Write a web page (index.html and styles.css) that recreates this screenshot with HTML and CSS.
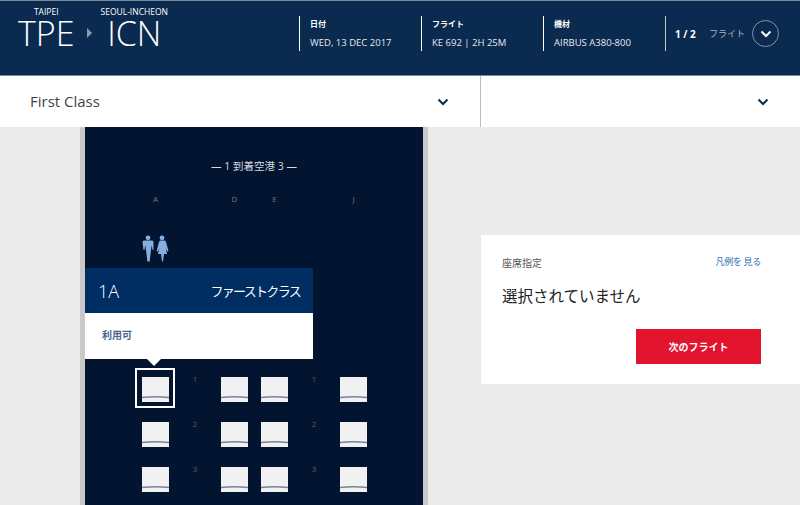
FILE: index.html
```html
<!DOCTYPE html>
<html lang="ja">
<head>
  <meta charset="UTF-8">
  <meta name="viewport" content="width=device-width, initial-scale=1.0">
  <title>座席指定</title>
  <link rel="stylesheet" href="styles.css">
</head>
<body>
  <svg class="defs" width="0" height="0">
    <symbol id="seat" viewBox="0 0 27 25">
      <rect width="27" height="25" fill="#f1f1f1"/>
      <path d="M0 20.500 Q13.500 19 27 20.500" fill="none" stroke="#77839a" stroke-width="1.400"/>
    </symbol>
  </svg>

  <header class="flight-bar">
    <div class="route">
      <div class="airport">
        <span class="city">TAIPEI</span>
        <span class="code">TPE</span>
      </div>
      <span class="route-arrow"></span>
      <div class="airport">
        <span class="city">SEOUL-INCHEON</span>
        <span class="code">ICN</span>
      </div>
    </div>
    <div class="info">
      <span class="info-label">日付</span>
      <span class="info-value">WED, 13 DEC 2017</span>
    </div>
    <div class="info">
      <span class="info-label">フライト</span>
      <span class="info-value">KE 692 | 2H 25M</span>
    </div>
    <div class="info">
      <span class="info-label">機材</span>
      <span class="info-value">AIRBUS A380-800</span>
    </div>
    <div class="pager">
      <strong>1 / 2</strong>
      <span>フライト</span>
      <button class="circle-btn">
        <svg width="12" height="8" viewBox="0 0 12 8"><path d="M1.500 1.500 6 6l4.500-4.500" fill="none" stroke="#fff" stroke-width="2"/></svg>
      </button>
    </div>
  </header>

  <nav class="cabin-select">
    <div class="select select-left">
      <span class="select-text">First Class</span>
      <svg width="12" height="8" viewBox="0 0 12 8"><path d="M1.500 1.500 6 6l4.500-4.500" fill="none" stroke="#0a2a4f" stroke-width="2"/></svg>
    </div>
    <div class="select select-right">
      <svg width="12" height="8" viewBox="0 0 12 8"><path d="M1.500 1.500 6 6l4.500-4.500" fill="none" stroke="#0a2a4f" stroke-width="2"/></svg>
    </div>
  </nav>

  <main class="content">
    <section class="cabin">
      <div class="cabin-title">— 1 到着空港 3 —</div>

      <div class="seat-grid letters">
        <span>A</span><span></span><span>D</span><span></span><span>E</span><span></span><span>J</span>
      </div>

      <div class="lavatory">
        <svg width="28" height="27" viewBox="0 0 28 27" fill="#86aede">
          <circle cx="7" cy="2.800" r="2.400"/>
          <path d="M1.500 7q0-1.500 1.500-1.500h8q1.500 0 1.500 1.500v8h-1l-.8-5-1.200 9-.8 7.500H6.300L5.500 19l-1.200-9-.8 5h-1z"/>
          <circle cx="21" cy="2.800" r="2.400"/>
          <path d="M18.500 5.500h5q1 0 1.500 1.500l2.500 9-1.500.5-1.500-4 1.500 6.500h-3l-1 7.500h-1l-1-7.500h-3l1.500-6.500-1.500 4-1.500-.5 2.500-9q.5-1.500 1.500-1.500z"/>
        </svg>
      </div>

      <div class="seat-rows">
        <div class="seat-grid row">
          <div class="seat selected"><svg width="27" height="25"><use href="#seat"/></svg></div>
          <span class="row-no">1</span>
          <div class="seat"><svg width="27" height="25"><use href="#seat"/></svg></div>
          <span></span>
          <div class="seat"><svg width="27" height="25"><use href="#seat"/></svg></div>
          <span class="row-no">1</span>
          <div class="seat"><svg width="27" height="25"><use href="#seat"/></svg></div>
        </div>
        <div class="seat-grid row">
          <div class="seat"><svg width="27" height="25"><use href="#seat"/></svg></div>
          <span class="row-no">2</span>
          <div class="seat"><svg width="27" height="25"><use href="#seat"/></svg></div>
          <span></span>
          <div class="seat"><svg width="27" height="25"><use href="#seat"/></svg></div>
          <span class="row-no">2</span>
          <div class="seat"><svg width="27" height="25"><use href="#seat"/></svg></div>
        </div>
        <div class="seat-grid row">
          <div class="seat"><svg width="27" height="25"><use href="#seat"/></svg></div>
          <span class="row-no">3</span>
          <div class="seat"><svg width="27" height="25"><use href="#seat"/></svg></div>
          <span></span>
          <div class="seat"><svg width="27" height="25"><use href="#seat"/></svg></div>
          <span class="row-no">3</span>
          <div class="seat"><svg width="27" height="25"><use href="#seat"/></svg></div>
        </div>
      </div>

      <div class="seat-popup">
        <div class="popup-head">
          <span class="popup-seat">1A</span>
          <span class="popup-class">ファーストクラス</span>
        </div>
        <div class="popup-body">利用可</div>
      </div>
    </section>

    <aside class="summary">
      <div class="summary-top">
        <span class="summary-label">座席指定</span>
        <a class="legend-link" href="#">凡例を 見る</a>
      </div>
      <div class="summary-status">選択されていません</div>
      <div class="summary-actions">
        <button class="next-btn">次のフライト</button>
      </div>
    </aside>
  </main>
</body>
</html>
```

FILE: styles.css
```css
* {
  box-sizing: border-box;
}

html, body {
  margin: 0;
  height: 505px;
  overflow: hidden;
}

body {
  background-color: #ebebeb;
  font-family: 'Open Sans', 'Noto Sans CJK JP', sans-serif;
}

.defs {
  position: absolute;
}

/* top flight bar */
.flight-bar {
  height: 76px;
  background: #0a2a4f;
  border-top: 1px solid #7b8794;
  border-bottom: 1px solid #7b8794;
  color: #fff;
  display: flex;
  align-items: flex-start;
  padding-top: 15px;
}

.route {
  width: 299px;
  display: flex;
  padding-left: 18px;
  margin-top: -10px;
}

.airport {
  display: flex;
  flex-direction: column;
  align-items: center;
}

.city {
  font-size: 8.500px;
  line-height: 11px;
}

.code {
  font-size: 34px;
  font-weight: 300;
  line-height: 32px;
}

.route-arrow {
  width: 0;
  height: 0;
  margin: 22px 0 0 12px;
  border-left: 5px solid #8d9aab;
  border-top: 5px solid transparent;
  border-bottom: 5px solid transparent;
}

.airport:last-child {
  margin-left: 9px;
}

.info {
  width: 122px;
  height: 35px;
  border-left: 1px solid #fff;
  padding: 1px 0 1px 10px;
  display: flex;
  flex-direction: column;
  justify-content: space-between;
}

.info-label {
  font-size: 8px;
  font-weight: 700;
  line-height: 13px;
}

.info-value {
  font-size: 9.500px;
  line-height: 14px;
  color: #e6e9ee;
}

.pager {
  height: 35px;
  border-left: 1px solid #c5cbd3;
  padding-left: 9px;
  display: flex;
  align-items: center;
  font-size: 9px;
}

.pager strong {
  font-size: 10px;
  width: 34px;
}

.pager span {
  color: #aab4c0;
  width: 43px;
}

.circle-btn {
  width: 27px;
  height: 27px;
  padding: 0;
  border: 1px solid #8593a5;
  border-radius: 50%;
  background: transparent;
  display: flex;
  justify-content: center;
  align-items: center;
}

/* cabin dropdowns */
.cabin-select {
  height: 51px;
  background: #fff;
  display: flex;
}

.select {
  display: flex;
  align-items: center;
  justify-content: space-between;
}

.select-left {
  width: 481px;
  padding: 0 31px 0 30px;
  border-right: 1px solid #bdbdbd;
  font-size: 15px;
  color: #444;
}

.select-text {
  margin-top: -2px;
}

.select-right {
  flex: 1;
  justify-content: flex-end;
  padding-right: 31px;
}

/* main area */
.content {
  display: flex;
  align-items: flex-start;
  padding-left: 80px;
}

.cabin {
  position: relative;
  width: 348px;
  height: 378px;
  background: #02142f;
  border-left: 5px solid #c9c9c9;
  border-right: 5px solid #c9c9c9;
  padding-top: 32px;
}

.cabin-title {
  text-align: center;
  color: #d5d9e0;
  font-size: 10.500px;
  line-height: 14px;
}

.seat-grid {
  display: grid;
  grid-template-columns: 27px 52px 27px 13px 27px 52px 27px;
  margin-left: 57px;
}

.letters {
  margin-top: 19px;
  height: 14px;
  font-size: 8px;
  line-height: 14px;
  text-align: center;
  color: #6f7889;
}

.lavatory {
  margin: 29px 0 0 56px;
  height: 27px;
}

.lavatory svg {
  display: block;
}

.seat-rows {
  margin-top: 115px;
  display: flex;
  flex-direction: column;
  gap: 20px;
}

.row {
  height: 25px;
}

.seat {
  position: relative;
  height: 25px;
}

.seat svg {
  display: block;
}

.seat.selected::after {
  content: "";
  position: absolute;
  left: -7px;
  top: -9px;
  width: 36px;
  height: 36px;
  border: 2px solid #fff;
}

.row-no {
  margin-top: -3px;
  font-size: 8px;
  line-height: 10px;
  text-align: center;
  color: #565f72;
}

/* popup over the seat map */
.seat-popup {
  position: absolute;
  left: 0;
  top: 141px;
  width: 228px;
}

.seat-popup::after {
  content: "";
  position: absolute;
  left: 62px;
  top: 91px;
  border-top: 7px solid #fff;
  border-left: 7px solid transparent;
  border-right: 7px solid transparent;
}

.popup-head {
  height: 45px;
  background: #002d62;
  color: #fff;
  display: flex;
  justify-content: space-between;
  align-items: center;
  padding: 0 13px;
}

.popup-seat {
  font-size: 18px;
  font-weight: 300;
}

.popup-class {
  font-size: 13px;
  letter-spacing: -1.700px;
}

.popup-body {
  height: 46px;
  background: #fff;
  color: #46658c;
  font-size: 10px;
  font-weight: 700;
  line-height: 44px;
  padding-left: 17px;
}

/* right summary card */
.summary {
  width: 319px;
  height: 149px;
  margin: 108px 0 0 53px;
  background: #fff;
  padding: 20px 39px 0 21px;
}

.summary-top {
  display: flex;
  justify-content: space-between;
  align-items: flex-start;
}

.summary-label {
  font-size: 10px;
  color: #555;
  line-height: 16px;
}

.legend-link {
  font-size: 9px;
  line-height: 13px;
  letter-spacing: -0.300px;
  color: #2f6cb5;
  text-decoration: none;
}

.summary-status {
  margin-top: 14px;
  font-size: 15.500px;
  line-height: 22px;
  color: #222;
}

.summary-actions {
  display: flex;
  justify-content: flex-end;
  margin-top: 22px;
}

.next-btn {
  width: 125px;
  height: 35px;
  border: 0;
  background: #e2132d;
  color: #fff;
  font-family: inherit;
  font-size: 10px;
  font-weight: 700;
}
```
